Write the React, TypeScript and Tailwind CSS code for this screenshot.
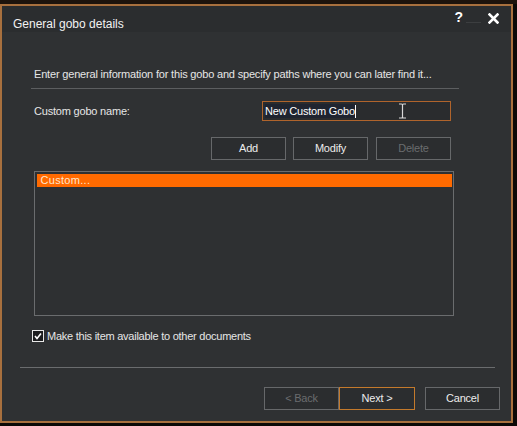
import React from "react";

function Btn({ label, disabled, active, className = "" }: { label: string; disabled?: boolean; active?: boolean; className?: string }) {
  return (
    <div
      className={
        "h-[23px] flex items-center justify-center text-[11px] tracking-[-0.2px] bg-[#2b2d2f] border " +
        (active ? "border-[#c47a2c] " : "border-[#66686a] ") +
        (disabled ? "text-[#6a6c6e] " : "text-[#ececec] ") +
        className
      }
    >
      {label}
    </div>
  );
}

export default function App() {
  return (
    <div className="w-[517px] h-[426px] bg-[#0b0907] flex flex-col font-['Liberation_Sans',Arial,sans-serif] overflow-hidden">
      <div className="h-[4px] shrink-0 bg-[#1d130c]" />
      <div className="w-[513px] h-[419px] shrink-0 border-2 border-[#a8703e] bg-[#2f3133] flex flex-col">
        {/* title bar */}
        <div className="h-[26px] shrink-0 bg-[#2b2d2f] flex">
          <div className="pl-[11px] pt-[11px] text-[12px] leading-[14px] text-[#f2f2f2]">
            General gobo details
          </div>
          <div className="ml-auto flex items-start pt-[4px] pr-[12px]">
            <div className="text-[14px] font-bold leading-[15px] text-white">?</div>
            <div className="w-[15px] h-[1px] bg-[#3c3e40] mt-[12px] ml-[3px] mr-[7px]" />
            <svg width="11" height="11" viewBox="0 0 11 11" className="mt-[3px]">
              <path d="M1.5 1.5 L9.5 9.5 M9.5 1.5 L1.5 9.5" stroke="#ffffff" strokeWidth="2.6" strokeLinecap="square" />
            </svg>
          </div>
        </div>

        {/* body */}
        <div className="flex flex-col">
          <div className="mt-[35px] pl-[32px] text-[11px] leading-[14px] tracking-[-0.18px] text-[#e6e6e6]">
            Enter general information for this gobo and specify paths where you can later find it...
          </div>
          <div className="mt-[7px] ml-[29px] w-[428px] h-[1px] bg-[#5c5e60]" />

          <div className="mt-[12px] pl-[32px] flex items-center h-[20px]">
            <div className="w-[228px] text-[11px] tracking-[-0.2px] text-[#e6e6e6]">Custom gobo name:</div>
            <div className="relative w-[189px] h-[20px] border border-[#b0642c] bg-[#2a2c2e] flex items-center pl-[2px]">
              <span className="text-[11px] leading-[14px] tracking-[-0.2px] text-white bg-[#1f2430]">New Custom Gobo</span>
              <span className="w-[1px] h-[13px] bg-white" />
              <svg width="9" height="16" viewBox="0 0 9 16" className="absolute left-[135px] top-[1px]">
                <path d="M1 1 H3.5 Q4.5 1 4.5 2 V14 Q4.5 15 3.5 15 H1 M8 1 H5.5 Q4.5 1 4.5 2 M4.5 14 Q4.5 15 5.5 15 H8" stroke="#d8d8d8" strokeWidth="1.2" fill="none" />
              </svg>
            </div>
          </div>

          <div className="mt-[16px] pl-[209px] flex">
            <Btn label="Add" className="w-[75px]" />
            <Btn label="Modify" className="w-[75px] ml-[7px]" />
            <Btn label="Delete" disabled className="w-[75px] ml-[8px]" />
          </div>

          <div className="mt-[11px] ml-[32px] w-[420px] h-[145px] border-[1.5px] border-[#6a6c6e] bg-[#2e3032] p-[1.5px]">
            <div className="h-[13px] bg-[#ff6a00] pl-[4px] text-[11px] leading-[13px] text-[#ffe6cc] tracking-[0.3px]">
              Custom...
            </div>
          </div>

          <div className="mt-[14px] ml-[30px] flex items-center h-[12px]">
            <div className="w-[12px] h-[12px] border border-[#e8e8e8] bg-[#1c1d1f] flex items-center justify-center">
              <svg width="10" height="10" viewBox="0 0 10 10">
                <path d="M2 5 L4 7.5 L8 2.5" stroke="#ffffff" strokeWidth="1.6" fill="none" />
              </svg>
            </div>
            <div className="ml-[3px] text-[11px] tracking-[-0.25px] text-[#e6e6e6]">Make this item available to other documents</div>
          </div>

          <div className="mt-[25px] ml-[18px] w-[475px] h-[1px] bg-[#6a6c6e]" />

          <div className="mt-[19px] ml-[262px] flex">
            <Btn label="< Back" disabled className="w-[75px]" />
            <Btn label="Next >" active className="w-[76px]" />
            <Btn label="Cancel" className="w-[75px] ml-[10px]" />
          </div>
        </div>
      </div>
    </div>
  );
}
